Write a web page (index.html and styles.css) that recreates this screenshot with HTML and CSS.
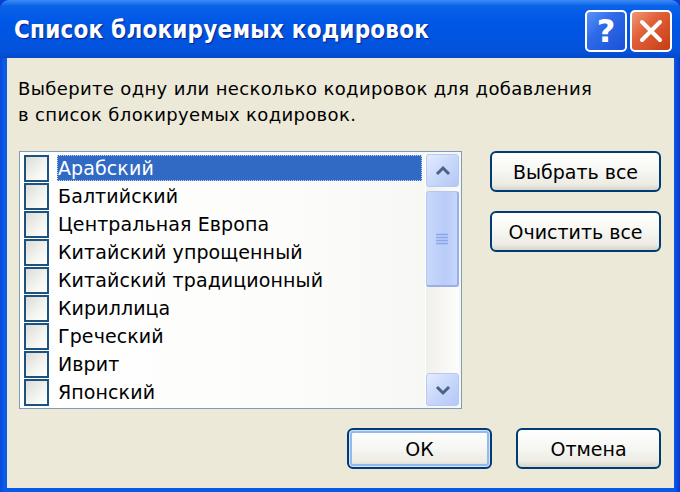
FILE: index.html
```html
<!DOCTYPE html>
<html lang="ru">
<head>
<meta charset="utf-8">
<title>Список блокируемых кодировок</title>
<link rel="stylesheet" href="styles.css">
</head>
<body>
<div class="window">
  <div class="titlebar">
    <div class="title">Список блокируемых кодировок</div>
    <div class="tb-buttons">
      <div class="tb-btn help">?</div>
      <div class="tb-btn close">
        <svg width="26" height="26" viewBox="0 0 26 26"><path d="M4 4 L22 22 M22 4 L4 22" stroke="#fff" stroke-width="4" stroke-linecap="round"/></svg>
      </div>
    </div>
  </div>
  <div class="body">
    <p class="desc">Выберите одну или несколько кодировок для добавления<br>в список блокируемых кодировок.</p>
    <div class="main">
      <div class="listbox">
        <div class="items">
          <div class="item"><span class="cb"></span><span class="label selected">Арабский</span></div>
          <div class="item"><span class="cb"></span><span class="label">Балтийский</span></div>
          <div class="item"><span class="cb"></span><span class="label">Центральная Европа</span></div>
          <div class="item"><span class="cb"></span><span class="label">Китайский упрощенный</span></div>
          <div class="item"><span class="cb"></span><span class="label">Китайский традиционный</span></div>
          <div class="item"><span class="cb"></span><span class="label">Кириллица</span></div>
          <div class="item"><span class="cb"></span><span class="label">Греческий</span></div>
          <div class="item"><span class="cb"></span><span class="label">Иврит</span></div>
          <div class="item"><span class="cb"></span><span class="label">Японский</span></div>
        </div>
        <div class="scrollbar">
          <div class="sb-btn">
            <svg width="16" height="12" viewBox="0 0 16 12"><path d="M2 9 L8 3 L14 9" fill="none" stroke="#4D6185" stroke-width="3"/></svg>
          </div>
          <div class="sb-track">
            <div class="sb-thumb">
              <svg width="14" height="12" viewBox="0 0 14 12"><path d="M1 1.5H13M1 4.5H13M1 7.5H13M1 10.5H13" stroke="#8DA6E6" stroke-width="1.4"/></svg>
            </div>
          </div>
          <div class="sb-btn">
            <svg width="16" height="12" viewBox="0 0 16 12"><path d="M2 3 L8 9 L14 3" fill="none" stroke="#4D6185" stroke-width="3"/></svg>
          </div>
        </div>
      </div>
      <div class="side">
        <button class="btn side-btn">Выбрать все</button>
        <button class="btn side-btn">Очистить все</button>
      </div>
    </div>
    <div class="footer">
      <button class="btn foot-btn default">ОК</button>
      <button class="btn foot-btn">Отмена</button>
    </div>
  </div>
</div>
</body>
</html>
```

FILE: styles.css
```css
html, body {
  margin: 0;
  padding: 0;
  background: #0A3FCF;
}
.window {
  width: 680px;
  height: 492px;
  display: flex;
  flex-direction: column;
  background: linear-gradient(to right, #0848D8 0, #0A5AE8 4px, #0A5AE8 674px, #0838C8 680px);
  border-radius: 9px 9px 0 0;
  overflow: hidden;
  font-family: "DejaVu Sans", "Liberation Sans", sans-serif;
}
.titlebar {
  height: 58px;
  flex: none;
  display: flex;
  align-items: center;
  justify-content: space-between;
  padding: 0 8px 0 14px;
  background: linear-gradient(to bottom, #3C8CF6 0, #0A62E8 6px, #0058E6 20px, #0054E0 40px, #0552DA 52px, #0448C8 58px);
}
.title {
  color: #fff;
  font-weight: bold;
  font-size: 24px;
  font-stretch: condensed;
  letter-spacing: 0.2px;
  text-shadow: 1px 1px 1px #0A1E8C;
  padding-top: 2px;
}
.tb-buttons {
  display: flex;
  gap: 3px;
  margin-top: 4px;
}
.tb-btn {
  width: 38px;
  height: 38px;
  border: 2px solid #fff;
  border-radius: 5px;
  display: flex;
  align-items: center;
  justify-content: center;
  color: #fff;
  font-family: "DejaVu Sans", sans-serif;
  font-weight: bold;
  font-size: 32px;
  line-height: 1;
}
.help {
  background: linear-gradient(135deg, #5A93F6 0, #2E6AE8 40%, #1A50D8 100%);
}
.close {
  background: linear-gradient(135deg, #F09878 0, #E06038 40%, #C83C14 100%);
}
.body {
  flex: 1;
  margin: 0 6px 4px 7px;
  background: #ECE9D8;
  padding: 0 13px 0 12px;
  display: flex;
  flex-direction: column;
  color: #000;
}
.desc {
  margin: 18px 0 0 -1px;
  font-size: 18px;
  letter-spacing: 0.35px;
  line-height: 26px;
  height: 54px;
  white-space: nowrap;
}
.main {
  display: flex;
  gap: 28px;
  margin-top: 21px;
}
.listbox {
  width: 438px;
  height: 252px;
  border: 1px solid #7F9DB9;
  background: linear-gradient(to right, #fff 0, #fcfcfb 60%, #f6f6f3 100%);
  display: flex;
  padding: 2px 2px 2px 1px;
}
.items {
  flex: 1;
  display: flex;
  flex-direction: column;
}
.item {
  height: 28px;
  display: flex;
  align-items: center;
  font-size: 19px;
  letter-spacing: 0.1px;
}
.cb {
  width: 21px;
  height: 23px;
  border: 2px solid #1C5180;
  background: linear-gradient(135deg, #DCDCD7 0, #F4F4F0 60%, #FFFFFF 100%);
  margin-left: 3px;
  margin-right: 8px;
  flex: none;
}
.label {
  height: 26px;
  line-height: 26px;
  padding: 0 1px;
}
.label.selected {
  flex: 1;
  background: #316AC5;
  color: #fff;
  outline: 1px dotted #C8D4F0;
  outline-offset: -1px;
  margin-right: 3px;
}
.scrollbar {
  width: 33px;
  display: flex;
  flex-direction: column;
  background: linear-gradient(to right, #F0EFEA, #FDFDFB);
  border-left: 1px solid #fff;
}
.sb-btn {
  height: 31px;
  flex: none;
  border: 1px solid #B7C9F3;
  border-radius: 3px;
  background: linear-gradient(135deg, #E4ECFE 0, #C8D8FB 50%, #B4C8F6 100%);
  display: flex;
  align-items: center;
  justify-content: center;
}
.sb-track {
  flex: 1;
  padding: 4px 0 0 0;
}
.sb-thumb {
  height: 93px;
  border: 1px solid #B4C6F2;
  border-radius: 3px;
  background: linear-gradient(to right, #C9D8FC, #B9CCF8 60%, #C6D6FB);
  display: flex;
  align-items: center;
  justify-content: center;
  border-right: 2px solid #9AB0E4;
  border-bottom: 2px solid #9AB0E4;
}
.side {
  display: flex;
  flex-direction: column;
  gap: 19px;
}
.btn {
  font-family: "DejaVu Sans", "Liberation Sans", sans-serif;
  font-size: 19px;
  color: #000;
  border: 2px solid #003C74;
  border-radius: 6px;
  background: linear-gradient(to bottom, #FFFFFF 0, #F6F6F2 50%, #ECEBE4 85%, #D8D4C8 100%);
  padding: 0;
  margin: 0;
}
.side-btn {
  width: 171px;
  height: 41px;
}
.footer {
  display: flex;
  justify-content: flex-end;
  gap: 24px;
  margin-top: 19px;
}
.foot-btn {
  width: 145px;
  height: 41px;
}
.foot-btn.default {
  box-shadow: inset 0 0 0 1px #CEE7FF, inset 0 0 0 3px #98B8EA;
}
```
